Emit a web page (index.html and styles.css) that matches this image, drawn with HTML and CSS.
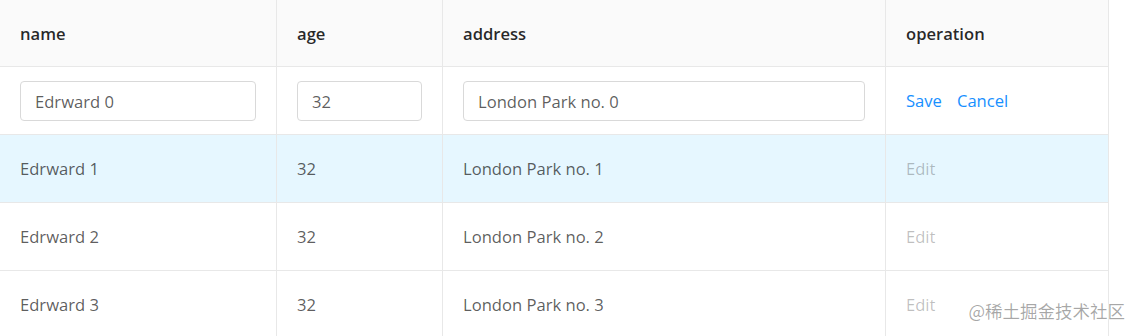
FILE: index.html
```html
<!DOCTYPE html>
<html>
<head>
<meta charset="utf-8">
<link rel="stylesheet" href="styles.css">
</head>
<body>
<div class="page">
  <div class="table">
    <div class="row head">
      <div class="cell">name</div>
      <div class="cell">age</div>
      <div class="cell">address</div>
      <div class="cell">operation</div>
    </div>
    <div class="row editing">
      <div class="cell"><input class="input" value="Edrward 0"></div>
      <div class="cell"><input class="input" value="32"></div>
      <div class="cell"><input class="input" value="London Park no. 0"></div>
      <div class="cell"><a class="link save">Save</a><a class="link">Cancel</a></div>
    </div>
    <div class="row hover">
      <div class="cell">Edrward 1</div>
      <div class="cell">32</div>
      <div class="cell">London Park no. 1</div>
      <div class="cell"><a class="link disabled">Edit</a></div>
    </div>
    <div class="row">
      <div class="cell">Edrward 2</div>
      <div class="cell">32</div>
      <div class="cell">London Park no. 2</div>
      <div class="cell"><a class="link disabled">Edit</a></div>
    </div>
    <div class="row">
      <div class="cell">Edrward 3</div>
      <div class="cell">32</div>
      <div class="cell">London Park no. 3</div>
      <div class="cell"><a class="link disabled">Edit</a></div>
    </div>
  </div>
  <div class="watermark">@稀土掘金技术社区</div>
</div>
</body>
</html>
```

FILE: styles.css
```css
html, body {
  margin: 0;
  padding: 0;
  background: #fff;
}
.page {
  position: relative;
  width: 1139px;
  height: 336px;
  overflow: hidden;
  font-family: "Open Sans", "Noto Sans", "Noto Sans CJK SC", sans-serif;
  font-size: 16.6px;
  color: rgba(0, 0, 0, 0.65);
}
.table {
  width: 1109px;
}
.row {
  display: grid;
  grid-template-columns: 277px 166px 443px 223px;
  border-bottom: 1px solid #e8e8e8;
}
.cell {
  box-sizing: border-box;
  border-right: 1px solid #e8e8e8;
  padding: 21px 20px 20px;
  line-height: 26px;
  height: 67px;
  white-space: nowrap;
}
.head .cell {
  height: 66px;
  color: rgba(0, 0, 0, 0.85);
  font-weight: 600;
}
.head {
  background: #fafafa;
}
.hover {
  background: #e6f7ff;
}
.editing .cell {
  padding: 14px 20px 13px;
  display: flex;
  align-items: center;
}
.input {
  box-sizing: border-box;
  width: 100%;
  height: 40px;
  border: 1px solid #d9d9d9;
  border-radius: 4px;
  padding: 0 14px;
  font: inherit;
  color: rgba(0, 0, 0, 0.65);
  background: #fff;
  outline: none;
}
.link {
  color: #1890ff;
  text-decoration: none;
}
.save {
  margin-right: 15px;
}
.disabled {
  color: rgba(0, 0, 0, 0.25);
}
.watermark {
  position: absolute;
  right: 14px;
  bottom: 14px;
  font-size: 17.5px;
  line-height: 22px;
  color: rgba(0, 0, 0, 0.35);
  text-shadow: 0 0 2px #fff, 0 0 2px #fff;
  font-family: "Noto Sans CJK SC", sans-serif;
}
```
